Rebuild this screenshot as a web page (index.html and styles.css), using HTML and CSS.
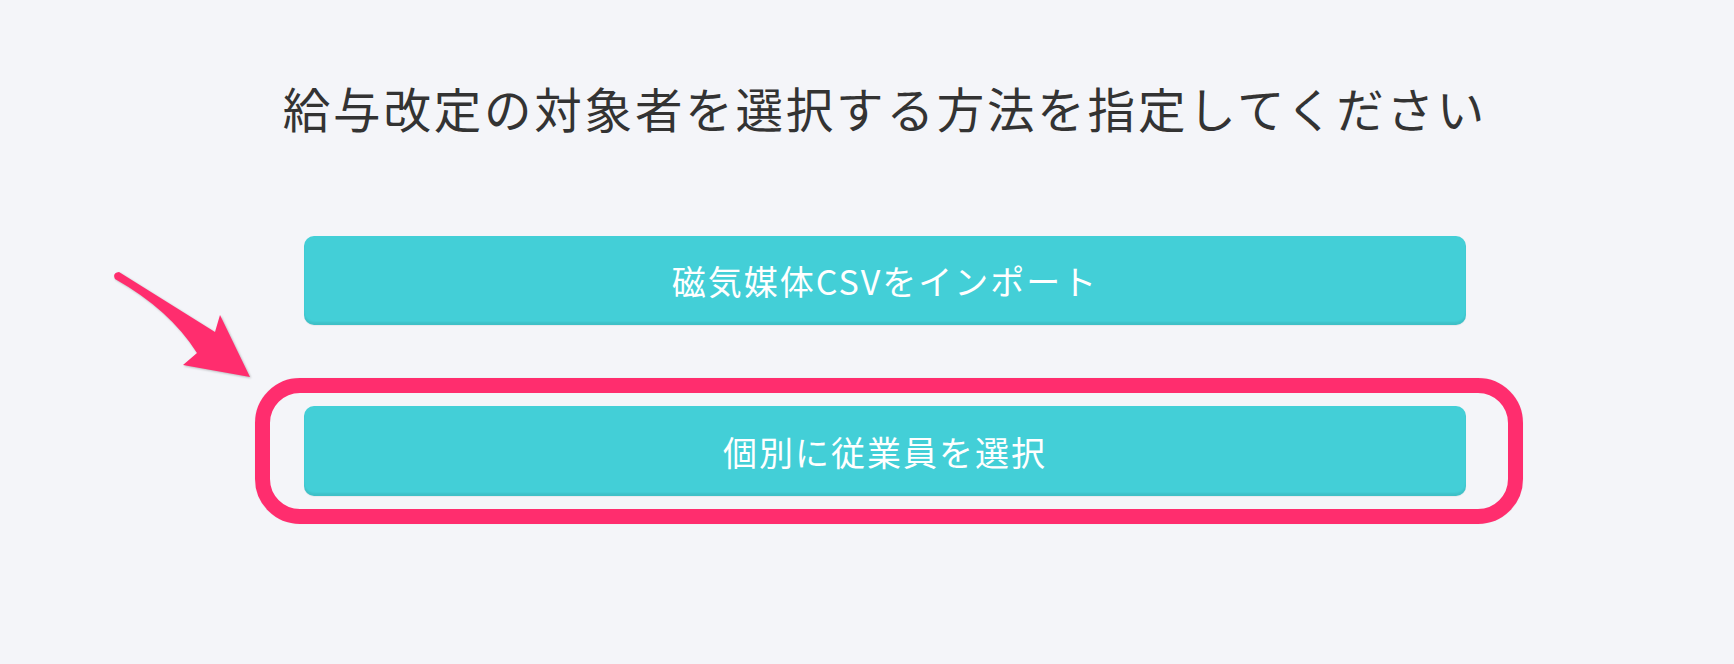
FILE: index.html
```html
<!DOCTYPE html>
<html lang="ja">
<head>
<meta charset="utf-8">
<title>給与改定</title>
<link rel="stylesheet" href="styles.css">
</head>
<body>
<main class="page">
  <h1 class="title">給与改定の対象者を選択する方法を指定してください</h1>
  <div class="actions">
    <button class="btn">磁気媒体CSVをインポート</button>
    <div class="highlight-wrap">
      <button class="btn">個別に従業員を選択</button>
      <span class="ring"></span>
    </div>
  </div>
  <svg class="arrow" width="170" height="130" viewBox="0 0 170 130" aria-hidden="true">
    <path d="M 19 12 L 115 72 L 120 55 L 150 117 L 83 105 L 97 93 Q 70 50 15 19 Q 12 13 19 12 Z" fill="#ff2d6e"/>
  </svg>
</main>
</body>
</html>
```
FILE: styles.css
```css
html, body {
  margin: 0;
  padding: 0;
}
body {
  background: #f4f5f9;
  font-family: "Noto Sans CJK JP", "Noto Sans", sans-serif;
  width: 1734px;
  height: 664px;
  overflow: hidden;
}
.page {
  position: relative;
  height: 664px;
}
.title {
  margin: 0;
  padding: 75px 0 0 36px;
  font-size: 47.5px;
  line-height: 66px;
  letter-spacing: 2.8px;
  font-weight: 400;
  color: #333333;
  text-align: center;
}
.actions {
  margin: 95px 0 0 304px;
  width: 1162px;
  display: flex;
  flex-direction: column;
  gap: 81px;
}
.btn {
  display: block;
  width: 100%;
  height: 89px;
  border: none;
  border-radius: 10px;
  background: #43cfd7;
  box-shadow: inset 0 -3px 2px rgba(0, 0, 0, 0.07), 0 1px 1px rgba(0, 0, 0, 0.05);
  color: #ffffff;
  font-family: "Noto Sans CJK JP", "Noto Sans", sans-serif;
  font-size: 34px;
  letter-spacing: 2px;
  font-weight: 400;
  padding: 0;
  cursor: pointer;
}
.highlight-wrap {
  position: relative;
}
.highlight-wrap .btn {
  height: 90px;
}
.ring {
  position: absolute;
  left: -49px;
  top: -28px;
  right: -57px;
  bottom: -28px;
  border: 15px solid #ff2d6e;
  border-radius: 45px;
  box-shadow: 0 0 1px rgba(0, 0, 0, 0.15);
  pointer-events: none;
}
.arrow {
  position: absolute;
  left: 100px;
  top: 260px;
  filter: drop-shadow(1px 1px 1px rgba(0, 0, 0, 0.25));
}
```
